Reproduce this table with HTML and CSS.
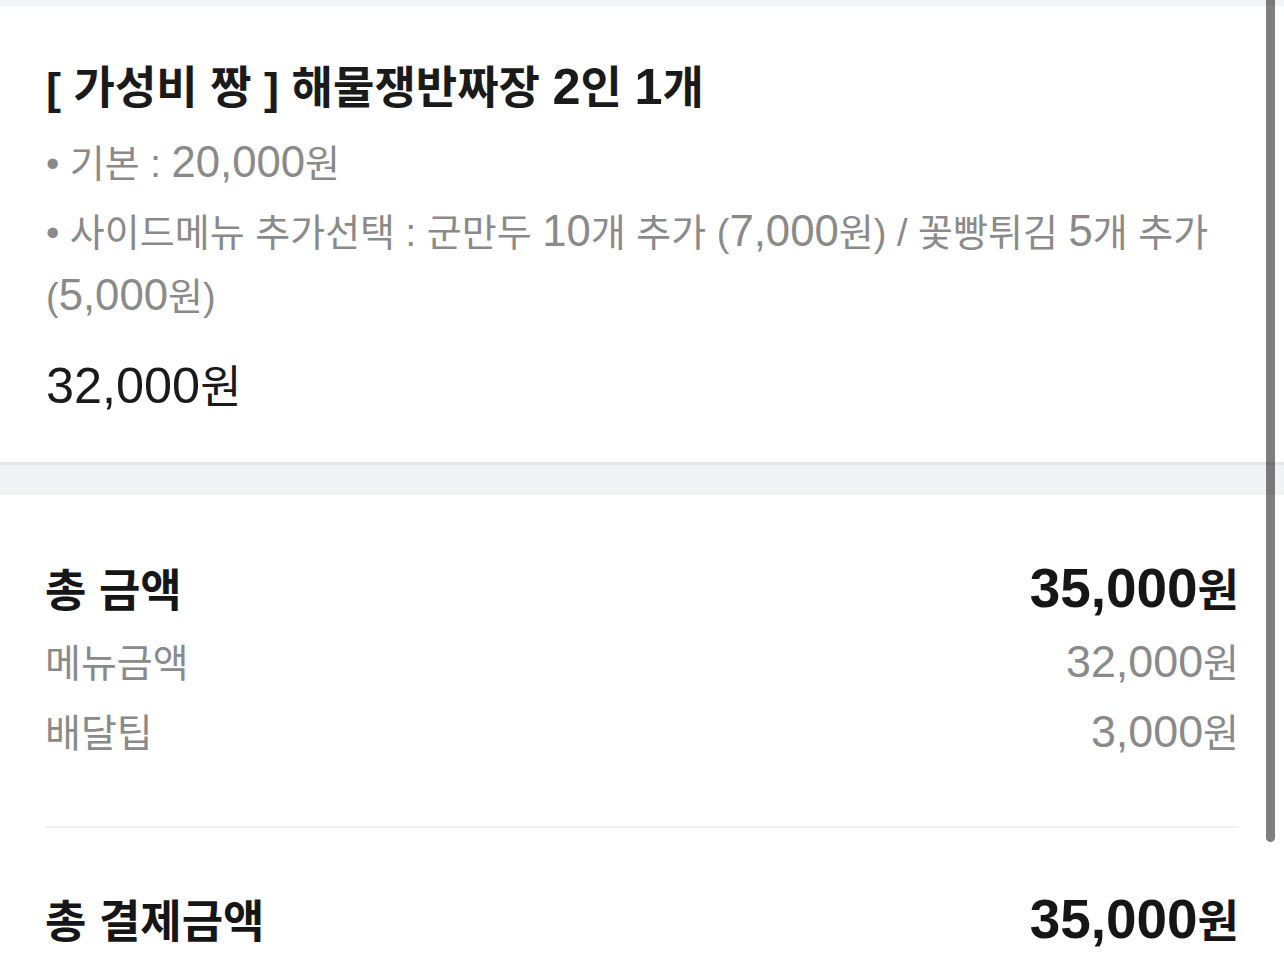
FILE: index.html
```html
<!DOCTYPE html>
<html lang="ko">
<head>
<meta charset="utf-8">
<title>주문 내역</title>
<link rel="stylesheet" href="styles.css">
</head>
<body>
<div class="page">
  <div class="top-strip"></div>
  <section class="menu-item">
    <h1 class="item-title">[ 가성비 짱 ] 해물쟁반짜장 <span class="num">2</span>인 <span class="num">1</span>개</h1>
    <ul class="options">
      <li class="option">• 기본 : <span class="num">20,000</span>원</li>
      <li class="option">• 사이드메뉴 추가선택 : 군만두 <span class="num">10</span>개 추가 (<span class="num">7,000</span>원) / 꽃빵튀김 <span class="num">5</span>개 추가 (<span class="num">5,000</span>원)</li>
    </ul>
    <div class="item-price"><span class="num">32,000</span>원</div>
  </section>
  <div class="band"></div>
  <section class="summary">
    <div class="row row-strong"><span>총 금액</span><span><span class="num">35,000</span>원</span></div>
    <div class="row row-sub row-first"><span>메뉴금액</span><span><span class="num">32,000</span>원</span></div>
    <div class="row row-sub"><span>배달팁</span><span><span class="num">3,000</span>원</span></div>
    <hr class="divider">
    <div class="row row-strong"><span>총 결제금액</span><span><span class="num">35,000</span>원</span></div>
  </section>
</div>
<div class="scroll-thumb"></div>
</body>
</html>
```

FILE: styles.css
```css
html, body {
  margin: 0;
  padding: 0;
  height: 100%;
  overflow: hidden;
  background: #ffffff;
}
body {
  font-family: "Liberation Sans", "Noto Sans CJK KR", sans-serif;
  color: #1a1a1a;
}
.num {
  font-size: 1.15em;
  line-height: 1;
}
.top-strip {
  height: 6px;
  background: #f2f3f5;
}
.menu-item {
  padding: 53px 46px 44px 46px;
}
.item-title {
  margin: 0;
  font-size: 45px;
  font-weight: 700;
  line-height: 60px;
  color: #1a1a1a;
}
.item-title .num {
  font-size: 1.12em;
}
.options {
  list-style: none;
  margin: 13px 0 0 0;
  padding: 0;
  display: flex;
  flex-direction: column;
  gap: 5px;
}
.option {
  font-size: 38px;
  line-height: 64px;
  color: #8a8a8a;
  word-break: keep-all;
}
.item-price {
  margin-top: 29px;
  font-size: 45px;
  line-height: 60px;
  color: #1a1a1a;
}
.item-price .num {
  font-size: 1.12em;
}
.band {
  height: 30px;
  border-top: 3px solid #e4e5e8;
  background: #f2f3f5;
}
.summary {
  padding: 66px 45px 0 45px;
}
.row {
  display: flex;
  justify-content: space-between;
  align-items: center;
}
.row-strong {
  font-size: 45px;
  font-weight: 700;
  line-height: 60px;
  color: #161616;
}
.row-strong .num {
  font-size: 1.22em;
}
.row-sub {
  font-size: 39px;
  line-height: 56px;
  color: #8a8a8a;
  margin-top: 14px;
}
.row-first {
  margin-top: 14px;
}
.divider {
  margin: 64px 0 64px 0;
  border: 0;
  height: 2px;
  background: #f1f1f1;
}
.scroll-thumb {
  position: fixed;
  top: 0;
  right: 9px;
  width: 9px;
  height: 842px;
  border-radius: 0 0 5px 5px;
  background: rgba(0, 0, 0, 0.5);
}
```
